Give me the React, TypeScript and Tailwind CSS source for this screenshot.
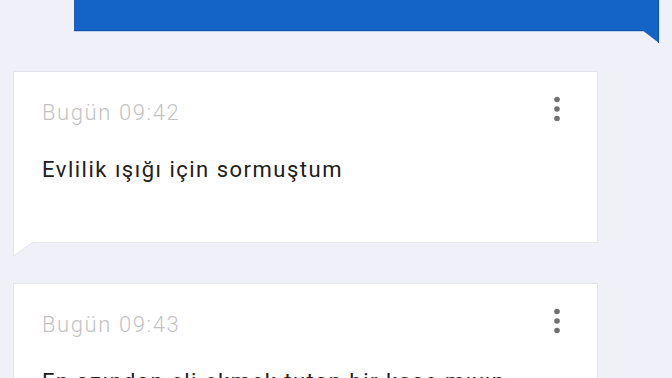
// Chat thread screen: outgoing blue bubble cut at top, incoming white cards below
type TMessage = {
  time: string;
  text: string;
  tail?: boolean;
};

const messages: TMessage[] = [
  { time: "Bugün 09:42", text: "Evlilik ışığı için sormuştum", tail: true },
  { time: "Bugün 09:43", text: "En azından eli ekmek tutan bir kaşe mıyın" },
];

function MoreIcon() {
  return (
    <svg width="8" height="26" viewBox="0 0 8 26" className="shrink-0">
      <circle cx="4" cy="3.5" r="2.8" fill="#707070" />
      <circle cx="4" cy="13" r="2.8" fill="#707070" />
      <circle cx="4" cy="22.5" r="2.8" fill="#707070" />
    </svg>
  );
}

function IncomingCard({ time, text, tail }: TMessage) {
  return (
    <div className="relative ml-[13px] w-[585px] h-[172px] bg-white border border-[#e3e4ec]">
      <div className="flex justify-between pl-[28px] pr-[36px] pt-[24px]">
        <span className="text-[22px] font-light tracking-[1.6px] text-[#c3c3c3] leading-[28px] mt-[3px]">
          {time}
        </span>
        <MoreIcon />
      </div>
      <p className="pl-[28px] mt-[28px] text-[22px] tracking-[1.5px] text-[#202020] leading-[30px]">
        {text}
      </p>
      {tail && (
        <svg
          width="22"
          height="16"
          viewBox="0 0 22 16"
          className="absolute left-[-1px] top-full -mt-[1px]"
        >
          <path d="M0 0 L21 0 L1 15 Z" fill="#ffffff" />
          <path d="M0.5 0 L0.5 15 L21 0.5" fill="none" stroke="#e3e4ec" strokeWidth="1" />
        </svg>
      )}
    </div>
  );
}

export default function App() {
  return (
    <div
      className="w-[672px] h-[378px] overflow-hidden bg-[#eff0f8]"
      style={{ fontFamily: "Roboto, 'Noto Sans', sans-serif" }}
    >
      {/* outgoing bubble, scrolled mostly off screen */}
      <div className="relative ml-[74px] w-[585px] h-[31px] bg-[#1463c7] border-b border-r border-[#0f4fa3] shadow-[0_1px_0_#b9d2f1]">
        <svg
          width="17"
          height="13"
          viewBox="0 0 17 13"
          className="absolute right-[-1px] top-full"
        >
          <path d="M0 0 L17 0 L17 13 Z" fill="#1463c7" />
          <path d="M16.5 0 L16.5 13" stroke="#0f4fa3" strokeWidth="1" />
        </svg>
      </div>

      <div className="mt-[40px] flex flex-col gap-[40px]">
        {messages.map((m) => (
          <IncomingCard key={m.time} {...m} />
        ))}
      </div>
    </div>
  );
}
